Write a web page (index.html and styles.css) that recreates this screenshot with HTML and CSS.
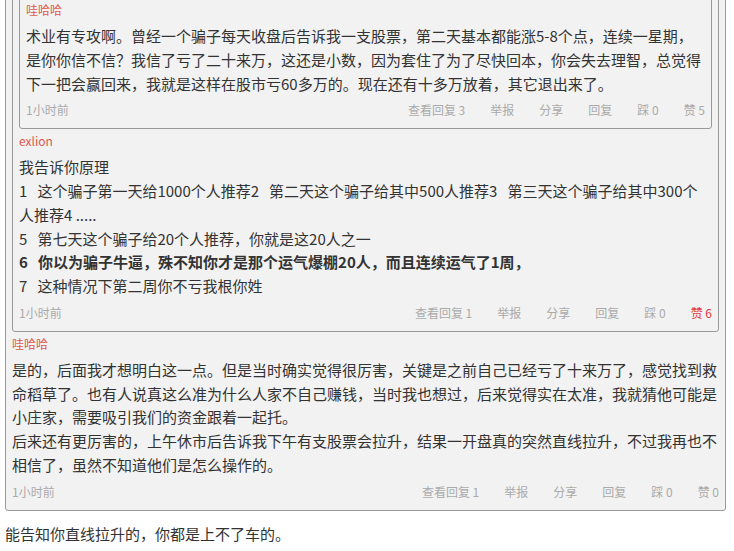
FILE: index.html
```html
<!DOCTYPE html>
<html lang="zh-CN">
  <head>
    <meta charset="UTF-8" />
    <meta name="viewport" content="width=device-width, initial-scale=1.0" />
    <title>评论</title>
    <link rel="stylesheet" href="styles.css">
  </head>
  <body>
    <div class="thread">
      <div class="quote">
        <div class="quote">
          <div class="quote">
            <div class="name">哇哈哈</div>
            <div class="text">
              术业有专攻啊。曾经一个骗子每天收盘后告诉我一支股票，第二天基本都能涨5-8个点，连续一星期，是你你信不信？我信了亏了二十来万，这还是小数，因为套住了为了尽快回本，你会失去理智，总觉得下一把会赢回来，我就是这样在股市亏60多万的。现在还有十多万放着，其它退出来了。
            </div>
            <div class="meta">
              <span class="time">1小时前</span>
              <span class="acts">
                <span>查看回复 3</span>
                <span>举报</span>
                <span>分享</span>
                <span>回复</span>
                <span>踩 0</span>
                <span>赞 5</span>
              </span>
            </div>
          </div>
          <div class="name">exlion</div>
          <div class="text">
            我告诉你原理<br>
            1&nbsp;&nbsp;&nbsp;这个骗子第一天给1000个人推荐2&nbsp;&nbsp;&nbsp;第二天这个骗子给其中500人推荐3&nbsp;&nbsp;&nbsp;第三天这个骗子给其中300个人推荐4 .....<br>
            5&nbsp;&nbsp;&nbsp;第七天这个骗子给20个人推荐，你就是这20人之一<br>
            <b>6&nbsp;&nbsp;&nbsp;你以为骗子牛逼，殊不知你才是那个运气爆棚20人，而且连续运气了1周，</b><br>
            7&nbsp;&nbsp;&nbsp;这种情况下第二周你不亏我根你姓
          </div>
          <div class="meta">
            <span class="time">1小时前</span>
            <span class="acts">
              <span>查看回复 1</span>
              <span>举报</span>
              <span>分享</span>
              <span>回复</span>
              <span>踩 0</span>
              <span class="liked">赞 6</span>
            </span>
          </div>
        </div>
        <div class="name">哇哈哈</div>
        <div class="text">
          是的，后面我才想明白这一点。但是当时确实觉得很厉害，关键是之前自己已经亏了十来万了，感觉找到救命稻草了。也有人说真这么准为什么人家不自己赚钱，当时我也想过，后来觉得实在太准，我就猜他可能是小庄家，需要吸引我们的资金跟着一起托。<br>
          后来还有更厉害的，上午休市后告诉我下午有支股票会拉升，结果一开盘真的突然直线拉升，不过我再也不相信了，虽然不知道他们是怎么操作的。
        </div>
        <div class="meta">
          <span class="time">1小时前</span>
          <span class="acts">
            <span>查看回复 1</span>
            <span>举报</span>
            <span>分享</span>
            <span>回复</span>
            <span>踩 0</span>
            <span>赞 0</span>
          </span>
        </div>
      </div>
      <p class="reply">能告知你直线拉升的，你都是上不了车的。</p>
    </div>
  </body>
</html>
```

FILE: styles.css
```css
* {
  margin: 0;
  padding: 0;
  box-sizing: border-box;
}

body {
  font-family: "Microsoft YaHei", "Noto Sans CJK SC", sans-serif;
  background-color: #ffffff;
  color: #333333;
  overflow: hidden;
}

.thread {
  margin: -23px 8px 0 5px;
}

.quote {
  background-color: #f2f2f2;
  border: 1px solid #999999;
  border-radius: 3px;
  padding: 6px 6px 8px;
}

.name {
  font-size: 12px;
  line-height: 24px;
  margin-bottom: 2px;
  color: #e0574c;
}

.text {
  font-size: 15px;
  line-height: 23.75px;
}

.meta {
  display: flex;
  justify-content: space-between;
  margin-top: 5px;
  font-size: 12px;
  line-height: 20px;
  color: #aaaaaa;
}

.acts {
  display: flex;
  gap: 25px;
}

.acts .liked {
  color: #e4393c;
}

.reply {
  margin-top: 11px;
  font-size: 15px;
  line-height: 24px;
}
```
